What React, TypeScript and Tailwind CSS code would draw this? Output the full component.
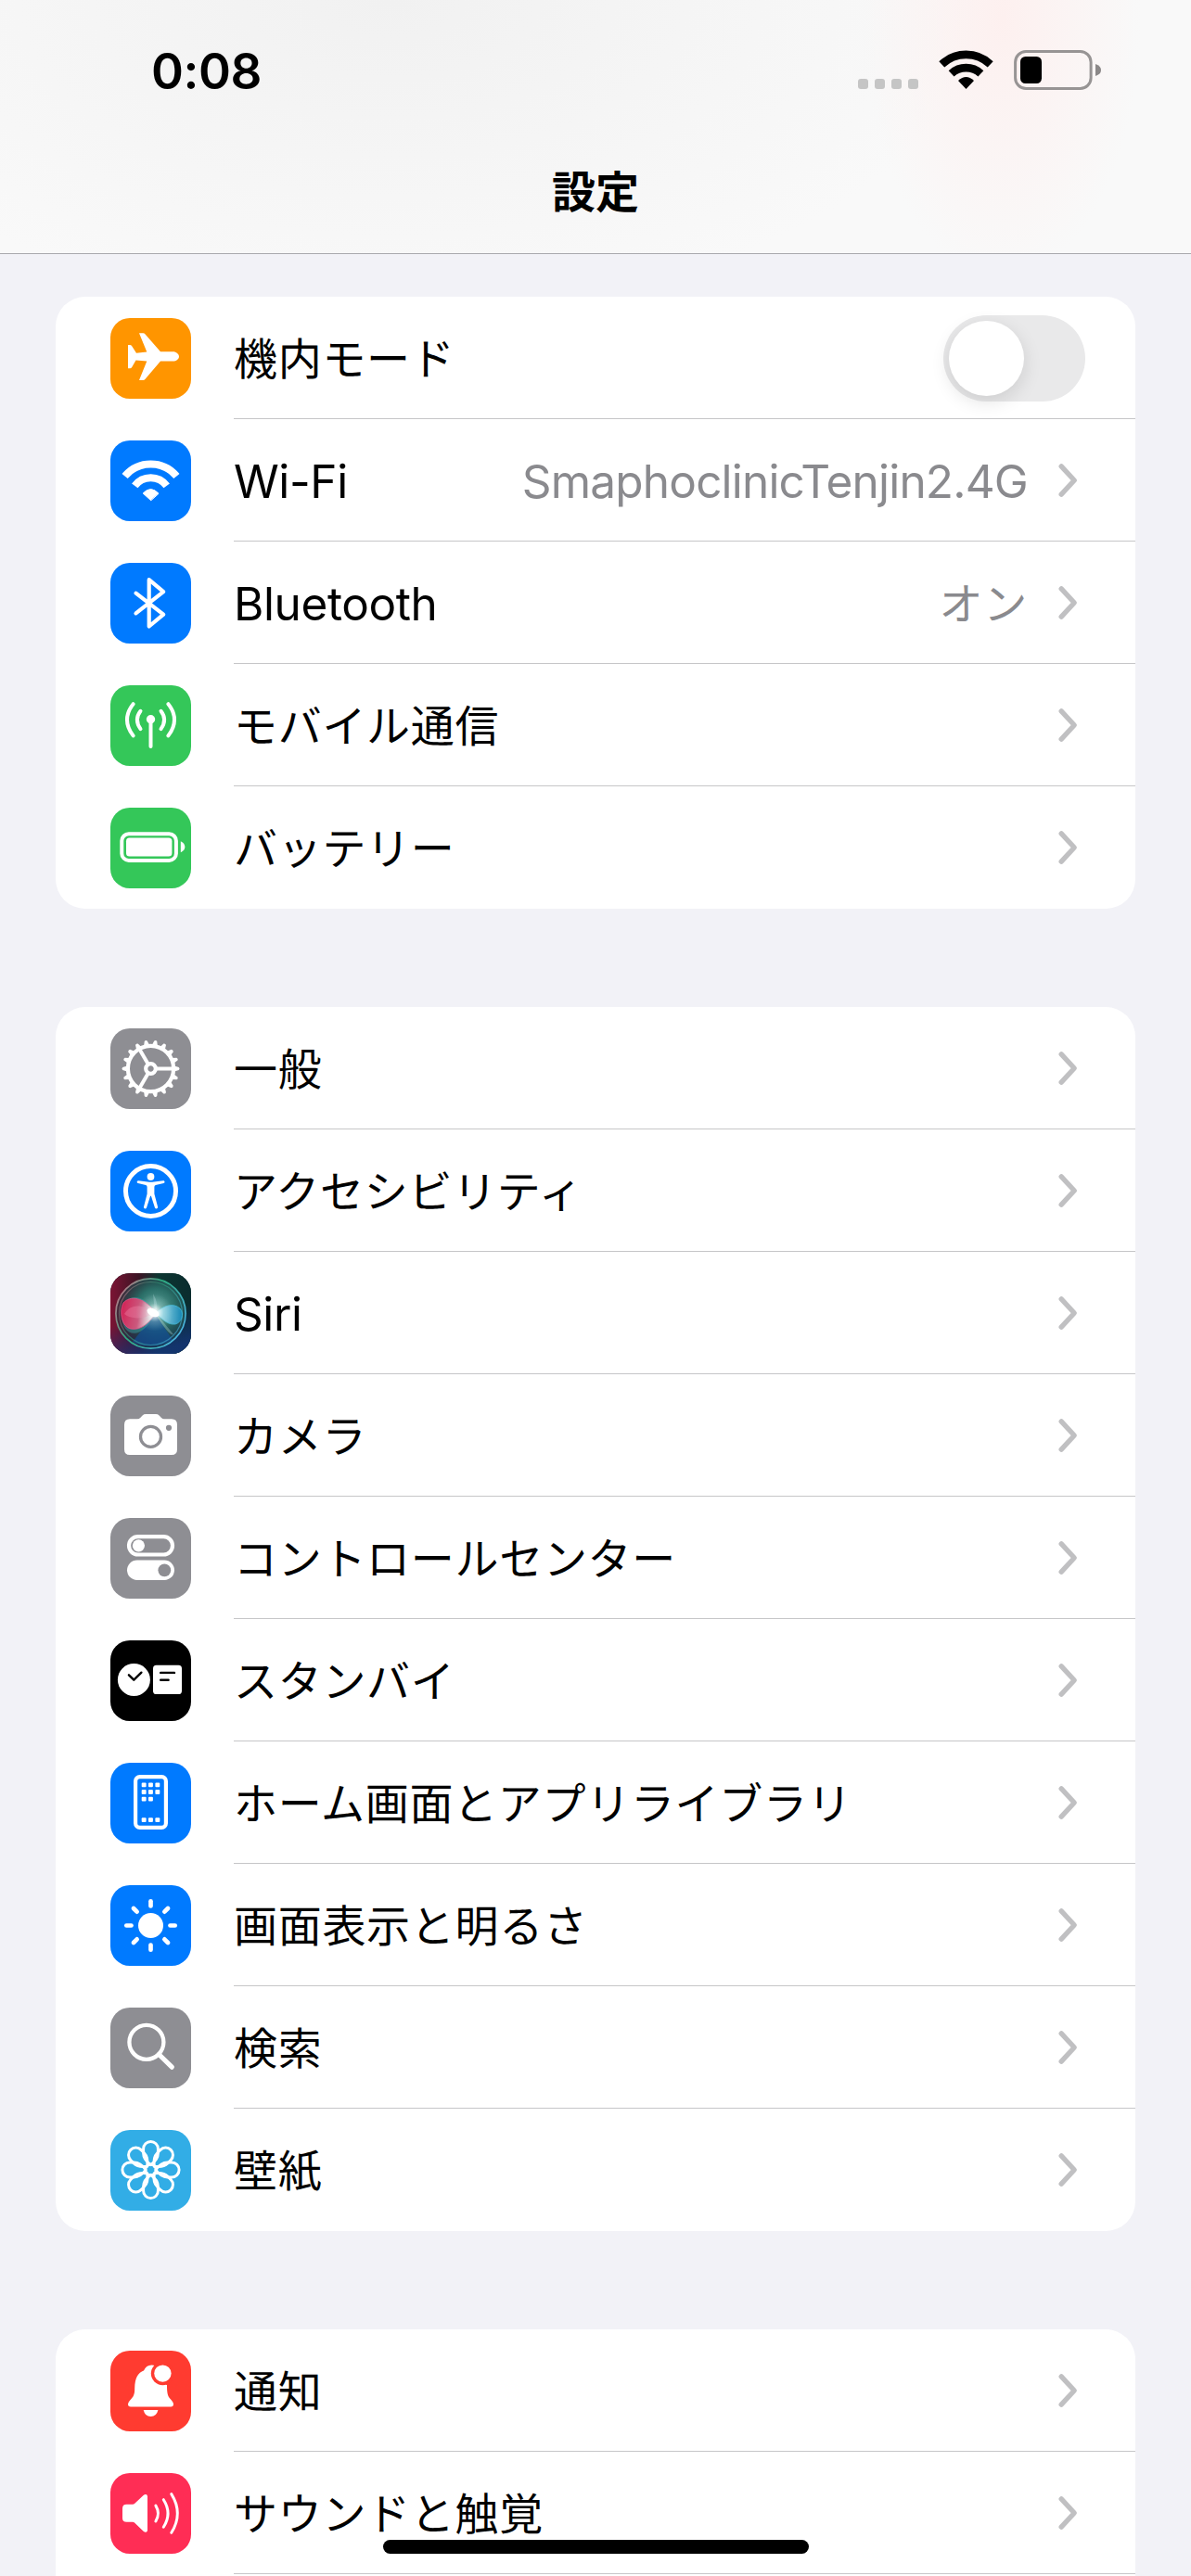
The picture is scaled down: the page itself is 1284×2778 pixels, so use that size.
import type { ReactNode } from "react";

type Item = {
  label: string;
  icon: ReactNode;
  bg: string;
  value?: string;
  toggle?: boolean;
  latin?: boolean;
};

const round = { strokeLinecap: "round", strokeLinejoin: "round" } as const;

const PlaneIcon = () => (
  <path
    fill="#fff"
    d="M54 36.3H67.5C71 36.3 74 39 74 41.4C74 44 71 46.6 67.5 46.6H54L37.6 65.8Q36.6 67 35.2 67H31L39.3 46.6L27.5 45.5L23.2 53Q22.4 54.3 21 54.3H19V29H21Q22.4 29 23.2 30.3L28 37.7L39.3 36.4L31 16.2H35.2Q36.6 16.2 37.6 17.4Z"
  />
);

const WifiIcon = () => (
  <>
    <g fill="none" stroke="#fff" strokeWidth="8">
      <path d="M15.6 38.5A36.3 36.3 0 0 1 71.4 38.5" />
      <path d="M26.3 48.8A21.4 21.4 0 0 1 60.7 48.8" />
    </g>
    <path fill="#fff" stroke="#fff" strokeWidth="1" {...round} d="M43.5 64.5L35.2 57Q43.5 48.2 51.8 57Z" />
  </>
);

const BluetoothIcon = () => (
  <path
    fill="none"
    stroke="#fff"
    strokeWidth="4.2"
    {...round}
    d="M27.5 32.7L57.2 55.6L41.7 68.5V18.2L57.2 31.2L27.5 54.4"
  />
);

const AntennaIcon = () => (
  <g fill="none" stroke="#fff" strokeWidth="4" {...round}>
    <circle cx="43.5" cy="36.8" r="4.7" fill="#fff" stroke="none" />
    <path d="M43.5 38V66" />
    <path d="M32.5 27.8Q25.3 37 32.5 47.2M54.5 27.8Q61.7 37 54.5 47.2" />
    <path d="M24.6 20.2Q11.4 37 24.6 54.4M62.4 20.2Q75.6 37 62.4 54.4" />
  </g>
);

const BatteryIcon = () => (
  <>
    <rect x="12.3" y="28.3" width="58.6" height="28.6" rx="7.5" fill="none" stroke="#fff" strokeWidth="4" />
    <rect x="17" y="32.6" width="49.4" height="20" rx="3.6" fill="#fff" />
    <path fill="#fff" d="M75.8 36.2Q80.3 38.2 80.3 42.3Q80.3 46.4 75.8 48.2Z" />
  </>
);

const TEETH = Array.from({ length: 18 }, (_, i) => i * 20);

const GearIcon = () => (
  <g transform="translate(43.5 43.5)" fill="none" stroke="#fff">
    <circle r="24.6" strokeWidth="4.2" />
    {TEETH.map((a) => (
      <path key={a} transform={`rotate(${a})`} d="M25.5 -3L30.3 -1.5Q31.8 0 30.3 1.5L25.5 3Z" fill="#fff" stroke="none" />
    ))}
    <circle r="5.3" strokeWidth="4.2" />
    {[0, 120, 240].map((a) => (
      <path key={a} transform={`rotate(${a})`} d="M6.5 0H24" strokeWidth="4" />
    ))}
  </g>
);

const AccessibilityIcon = () => (
  <>
    <circle cx="43.5" cy="43.5" r="27" fill="none" stroke="#fff" strokeWidth="5" />
    <circle cx="43.5" cy="28" r="3.9" fill="#fff" />
    <path
      fill="#fff"
      d="M30.2 32.3L40 33.6Q43.5 34 47 33.6L57 32.3C58.9 32.2 59 34.8 57.4 35.1L48.8 37Q47.4 37.4 47.4 39V46.5L51.1 60.6C51.4 62.7 48.6 63.1 48 61.4L43.9 48.8H43.1L39 61.4C38.4 63.1 35.7 62.7 36 60.6L39.6 46.5V39Q39.6 37.4 38.2 37L29.8 35.1C28.1 34.7 28.3 32.1 30.2 32.3Z"
    />
  </>
);

const SiriIcon = () => (
  <>
    <defs>
      <linearGradient id="siriLeft" x1="0" y1="0" x2="1" y2="0">
        <stop offset="0" stopColor="#7c1434" />
        <stop offset="0.35" stopColor="#3b1424" />
        <stop offset="0.6" stopColor="#0d3631" />
        <stop offset="1" stopColor="#0a2c2e" />
      </linearGradient>
      <linearGradient id="siriDown" x1="0.2" y1="0" x2="0.5" y2="1">
        <stop offset="0.55" stopColor="#12307a" stopOpacity="0" />
        <stop offset="1" stopColor="#15357c" stopOpacity="0.8" />
      </linearGradient>
      <radialGradient id="siriBall" cx="0.58" cy="0.42" r="0.55">
        <stop offset="0" stopColor="#5fa39c" />
        <stop offset="0.5" stopColor="#2b6f68" />
        <stop offset="1" stopColor="#1d3a42" stopOpacity="0.5" />
      </radialGradient>
      <linearGradient id="siriRim" x1="0" y1="0.1" x2="1" y2="0.7">
        <stop offset="0" stopColor="#d0708a" />
        <stop offset="0.45" stopColor="#2ea77e" />
        <stop offset="1" stopColor="#4bb4e0" />
      </linearGradient>
      <linearGradient id="siriPink" x1="0" y1="0" x2="1" y2="0.2">
        <stop offset="0" stopColor="#e01850" />
        <stop offset="0.6" stopColor="#d8587f" />
        <stop offset="1" stopColor="#fff" />
      </linearGradient>
      <linearGradient id="siriBlue" x1="0" y1="0" x2="1" y2="0">
        <stop offset="0" stopColor="#c8f5ff" />
        <stop offset="1" stopColor="#1590c4" />
      </linearGradient>
      <radialGradient id="siriGlow">
        <stop offset="0" stopColor="#fff" />
        <stop offset="0.22" stopColor="#fff" stopOpacity="0.75" />
        <stop offset="0.5" stopColor="#d5f5f0" stopOpacity="0.25" />
        <stop offset="1" stopColor="#bdeee8" stopOpacity="0" />
      </radialGradient>
    </defs>
    <rect width="87" height="87" fill="url(#siriLeft)" />
    <rect width="87" height="87" fill="url(#siriDown)" />
    <circle cx="43.5" cy="43.5" r="37.5" fill="url(#siriBall)" />
    <path fill="#124f96" opacity="0.7" d="M48 43L24 74Q44 84 67 72Z" />
    <circle cx="43.5" cy="43.5" r="37.6" fill="none" stroke="url(#siriRim)" strokeWidth="1.7" />
    <circle cx="43.5" cy="43.5" r="34" fill="none" stroke="url(#siriRim)" strokeWidth="1.2" opacity="0.55" />
    <path fill="#3ba4a6" opacity="0.45" d="M48 43C34 17 12 23 12 46C13 70 35 73 48 43Z" />
    <path fill="url(#siriPink)" stroke="#f0508a" strokeWidth="0.8" opacity="0.92" d="M49 43C36 25 21 24 14 32C9 41 12 58 22 60C34 62 42 53 49 43Z" />
    <path fill="#f07fa5" opacity="0.4" d="M48 43C34 33 22 33 15 44C22 50 36 50 48 43Z" />
    <path fill="url(#siriBlue)" stroke="#49c6e8" strokeWidth="0.8" opacity="0.85" d="M49 43C58 34 68 32 75 38C80 44 77 53 70 55C62 56 56 50 49 43Z" />
    <path fill="#c4e6ec" opacity="0.3" d="M48 43L46 22Q53 34 49 43L68 66Q64 69 48 43L30 72Z" />
    <circle cx="47.5" cy="42.5" r="20" fill="url(#siriGlow)" />
    <ellipse cx="46" cy="42.5" rx="7" ry="4" fill="#fff" transform="rotate(28 46 42.5)" />
  </>
);

const CameraIcon = () => (
  <>
    <path
      fill="#fff"
      d="M21 25.3H29Q31 25.3 32.2 24L34.6 21.4Q36 20 38.2 20H49Q51.2 20 52.6 21.4L55 24Q56.2 25.3 58 25.3H66Q72 25.3 72 31.3V58Q72 64 66 64H21Q15 64 15 58V31.3Q15 25.3 21 25.3Z"
    />
    <circle cx="43.5" cy="44.4" r="11" fill="none" stroke="#8e8e93" strokeWidth="3.3" />
    <circle cx="63" cy="34.8" r="3.1" fill="#8e8e93" />
  </>
);

const ControlsIcon = () => (
  <>
    <rect x="20" y="20.1" width="47" height="19.4" rx="9.7" fill="none" stroke="#fff" strokeWidth="4.2" />
    <circle cx="30.4" cy="29.8" r="6.6" fill="#fff" />
    <rect x="18" y="45.6" width="51" height="21.4" rx="10.7" fill="#fff" />
    <circle cx="58.3" cy="56.3" r="6.9" fill="#8e8e93" />
  </>
);

const StandbyIcon = () => (
  <>
    <circle cx="25.4" cy="42.5" r="17.5" fill="#fff" />
    <rect x="46" y="26.8" width="31" height="31.2" rx="3.6" fill="#fff" />
    <g fill="none" stroke="#000" strokeWidth="2.4" {...round}>
      <path d="M19.9 37.3L25.3 42.7L33.4 34.7" />
      <path d="M54.2 34.9H69M54.2 42.8H62.6" />
    </g>
  </>
);

const HOME_DOTS = [
  [33.7, 21.4], [41, 21.4], [48.4, 21.4],
  [33.7, 29], [41, 29], [48.4, 29],
  [33.7, 36.7], [41, 36.7],
  [33.7, 59.2], [41, 59.2], [48.4, 59.2],
];

const HomeScreenIcon = () => (
  <>
    <rect x="27.1" y="15.1" width="32.8" height="54.8" rx="4.6" fill="none" stroke="#fff" strokeWidth="4.2" />
    {HOME_DOTS.map(([x, y]) => (
      <rect key={`${x}-${y}`} x={x} y={y} width="4.9" height="4.9" rx="1" fill="#fff" />
    ))}
  </>
);

const SunIcon = () => (
  <g transform="translate(43.5 43.5)">
    <circle r="13.5" fill="#fff" />
    {[0, 45, 90, 135, 180, 225, 270, 315].map((a) => (
      <path key={a} transform={`rotate(${a})`} d="M21 0H26.2" stroke="#fff" strokeWidth="4.7" strokeLinecap="round" />
    ))}
  </g>
);

const SearchIcon = () => (
  <g fill="none" stroke="#fff" strokeLinecap="round">
    <circle cx="38.9" cy="37.3" r="18.5" strokeWidth="4.3" />
    <path d="M52.3 50.5L66.3 64.2" strokeWidth="5.2" />
  </g>
);

const FlowerIcon = () => (
  <g transform="translate(43.5 43)" fill="none" stroke="#fff" strokeWidth="3">
    {[0, 45, 90, 135, 180, 225, 270, 315].map((a) => (
      <path
        key={a}
        transform={`rotate(${a})`}
        d="M0 -5.5C-5 -9 -7.9 -13.5 -7.9 -18V-22.7A7.9 7.9 0 0 1 7.9 -22.7V-18C7.9 -13.5 5 -9 0 -5.5Z"
      />
    ))}
    <circle r="5.4" strokeWidth="2.4" />
  </g>
);

const BellIcon = () => (
  <>
    <path
      fill="#fff"
      d="M22 60.4Q19 60.4 19 57.8Q19 55.7 22.5 52C25.5 48.8 26.2 46 26.2 40.5C26.4 29 30 24 36 21.6Q38.5 15.6 44.5 15.5Q47 15.6 48 16.8Q60 39 61 36.8C61 45 61.5 48.8 64.6 52Q68 55.6 68 57.8Q68 60.4 65.2 60.4Z"
    />
    <path fill="#fff" d="M35.7 64H51.4Q49.8 71 43.5 71Q37.2 71 35.7 64Z" />
    <circle cx="56.4" cy="24.6" r="12.6" fill="#ff3b30" />
    <circle cx="56.4" cy="24.6" r="9.2" fill="#fff" />
  </>
);

const SoundIcon = () => (
  <>
    <path
      fill="#fff"
      d="M17.5 33.8H24Q25.2 33.8 26 33L35.6 24Q37.2 22.8 38.4 23.1Q40 23.4 40 25.2V61.8Q40 63.5 38.4 63.8Q37.2 64.1 35.6 62.8L26 53.6Q25.2 52.8 24 52.8H17.5Q13 52.8 13 48.4V38.2Q13 33.8 17.5 33.8Z"
    />
    <g fill="none" stroke="#fff" strokeWidth="3" {...round}>
      <path d="M48.9 35.1Q54 43.5 48.9 52" />
      <path d="M57.3 28.7Q66.8 43.5 57.3 58.2" />
      <path d="M65.8 22.6Q78.8 43.5 65.8 64.3" />
    </g>
  </>
);

const groups: Item[][] = [
  [
    { label: "機内モード", icon: <PlaneIcon />, bg: "#ff9500", toggle: true },
    { label: "Wi-Fi", icon: <WifiIcon />, bg: "#007aff", value: "SmaphoclinicTenjin2.4G", latin: true },
    { label: "Bluetooth", icon: <BluetoothIcon />, bg: "#007aff", value: "オン", latin: true },
    { label: "モバイル通信", icon: <AntennaIcon />, bg: "#34c759" },
    { label: "バッテリー", icon: <BatteryIcon />, bg: "#34c759" },
  ],
  [
    { label: "一般", icon: <GearIcon />, bg: "#8e8e93" },
    { label: "アクセシビリティ", icon: <AccessibilityIcon />, bg: "#007aff" },
    { label: "Siri", icon: <SiriIcon />, bg: "#0a2c2e", latin: true },
    { label: "カメラ", icon: <CameraIcon />, bg: "#8e8e93" },
    { label: "コントロールセンター", icon: <ControlsIcon />, bg: "#8e8e93" },
    { label: "スタンバイ", icon: <StandbyIcon />, bg: "#000" },
    { label: "ホーム画面とアプリライブラリ", icon: <HomeScreenIcon />, bg: "#007aff" },
    { label: "画面表示と明るさ", icon: <SunIcon />, bg: "#007aff" },
    { label: "検索", icon: <SearchIcon />, bg: "#8e8e93" },
    { label: "壁紙", icon: <FlowerIcon />, bg: "#32ade6" },
  ],
  [
    { label: "通知", icon: <BellIcon />, bg: "#ff3b30" },
    { label: "サウンドと触覚", icon: <SoundIcon />, bg: "#ff2d55" },
  ],
];

const jpText = "font-['Noto_Sans_CJK_JP',sans-serif] text-[47px] leading-[60px] tracking-[0.7px] pb-[4px]";
const latinText = "font-['Inter','Noto_Sans_CJK_JP',sans-serif] text-[49.5px] leading-[60px] pt-[3px]";

const Chevron = () => (
  <svg className="ml-[32px] h-[38px] w-[24px]" viewBox="0 0 24 38" fill="none">
    <path d="M4.2 3.9L18.2 19L4.2 34.1" stroke="#c0c0c2" strokeWidth="5.4" {...round} />
  </svg>
);

const Row = ({ item, last }: { item: Item; last: boolean }) => (
  <li className="flex h-[132px] pl-[59px]">
    <svg className="mt-[23px] size-[87px] shrink-0 rounded-[21px]" viewBox="0 0 87 87">
      <rect width="87" height="87" fill={item.bg} />
      {item.icon}
    </svg>
    <div className={`ml-[46px] flex flex-1 items-center ${last ? "pb-px" : "border-b border-[#c6c6c8]"}`}>
      <span className={`${item.latin ? `${latinText} tracking-[-0.4px]` : jpText} flex-1 whitespace-nowrap text-black`}>
        {item.label}
      </span>
      {item.toggle ? (
        <span className="mr-[54px] mt-[2px] flex h-[93px] w-[153px] items-center rounded-full bg-[#e9e9ea] pl-[6px]">
          <span className="size-[81px] rounded-full bg-white shadow-[0_6px_20px_rgba(0,0,0,0.12)]" />
        </span>
      ) : (
        <>
          {item.value && (
            <span className={`${item.value === "オン" ? jpText : `${latinText} tracking-[-0.8px]`} text-[#8a8a8e]`}>
              {item.value}
            </span>
          )}
          <div className="mr-[60px] flex">
            <Chevron />
          </div>
        </>
      )}
    </div>
  </li>
);

const StatusBar = () => (
  <div className="flex h-[150px] items-start justify-between pl-[163px] pr-[96px]">
    <span className="mt-[47px] font-['Inter',sans-serif] text-[53px] font-semibold leading-[60px] tracking-[-0.4px] text-black">
      0:08
    </span>
    <svg className="mt-[50px] h-[50px] w-[264px]" viewBox="924 50 264 50">
      <g fill="#c5c5c5">
        <rect x="925" y="85" width="11" height="11" rx="3" />
        <rect x="943" y="85" width="11" height="11" rx="3" />
        <rect x="961" y="85" width="11" height="11" rx="3" />
        <rect x="979" y="85" width="11" height="11" rx="3" />
      </g>
      <g fill="none" stroke="#000" strokeWidth="8.6">
        <path d="M1015.3 69.4A38 38 0 0 1 1067.7 69.4" />
        <path d="M1025.6 79.4A23.4 23.4 0 0 1 1057.4 79.4" />
      </g>
      <path d="M1041.5 96L1033 87Q1041.5 79 1050 87Z" />
      <rect x="1094.6" y="55.5" width="81.5" height="40" rx="11.5" fill="none" stroke="#979494" strokeWidth="3" />
      <rect x="1100" y="61" width="23" height="29" rx="5.5" />
      <path fill="#8b8888" d="M1181 69Q1187 71 1187 75.5Q1187 80 1181 82Z" />
    </svg>
  </div>
);

const App = () => {
  return (
    <div className="relative flex h-[2778px] w-[1284px] flex-col overflow-hidden bg-[#f2f2f7]">
      <header className="h-[274px] shrink-0 border-b border-[#a9a9ad] bg-[radial-gradient(ellipse_150px_280px_at_1080px_20px,#fdf0ef_0%,#fbf3f200_100%),radial-gradient(ellipse_640px_340px_at_420px_0px,#f1f1f1_0%,#f1f1f100_100%)] bg-[#f9f9f9]">
        <StatusBar />
        <h1 className="mt-[24px] text-center font-['Noto_Sans_CJK_JP',sans-serif] text-[47px] font-bold leading-[60px] text-black">
          設定
        </h1>
      </header>

      <main className="flex flex-col gap-[106px] px-[60px] pt-[46px]">
        {groups.map((items, g) => (
          <ul key={g} className={`bg-white ${g === 2 ? "h-[300px] rounded-t-[32px]" : "rounded-[32px]"}`}>
            {items.map((item, i) => (
              <Row key={item.label} item={item} last={g < 2 && i === items.length - 1} />
            ))}
          </ul>
        ))}
      </main>

      {/* Home indicator */}
      <div className="absolute left-[413px] top-[2739px] h-[15px] w-[459px] rounded-full bg-black" />
    </div>
  );
};

export default App;
